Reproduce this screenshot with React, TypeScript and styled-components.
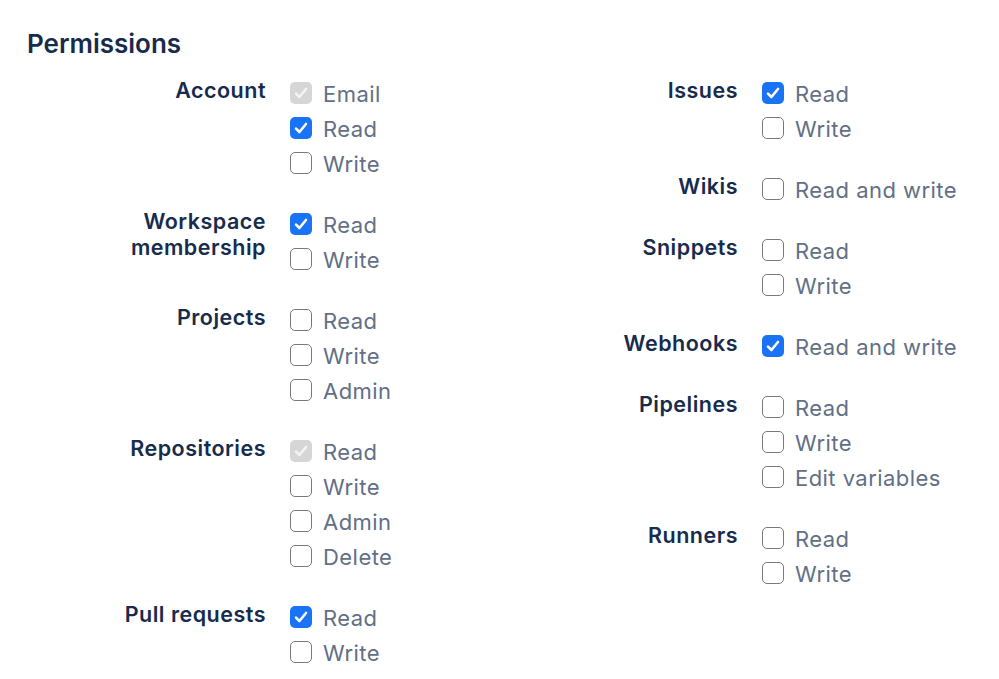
import styled, { createGlobalStyle } from "styled-components";

const GlobalStyle = createGlobalStyle`
  body {
    margin: 0;
    background: #fff;
    font-family: Inter, "Noto Sans", "Liberation Sans", sans-serif;
  }
`;

type Option = { label: string; checked?: boolean; disabled?: boolean };
type Group = { name: string; options: Option[] };

const leftGroups: Group[] = [
  {
    name: "Account",
    options: [
      { label: "Email", checked: true, disabled: true },
      { label: "Read", checked: true },
      { label: "Write" },
    ],
  },
  {
    name: "Workspace membership",
    options: [{ label: "Read", checked: true }, { label: "Write" }],
  },
  {
    name: "Projects",
    options: [{ label: "Read" }, { label: "Write" }, { label: "Admin" }],
  },
  {
    name: "Repositories",
    options: [
      { label: "Read", checked: true, disabled: true },
      { label: "Write" },
      { label: "Admin" },
      { label: "Delete" },
    ],
  },
  {
    name: "Pull requests",
    options: [{ label: "Read", checked: true }, { label: "Write" }],
  },
];

const rightGroups: Group[] = [
  {
    name: "Issues",
    options: [{ label: "Read", checked: true }, { label: "Write" }],
  },
  { name: "Wikis", options: [{ label: "Read and write" }] },
  { name: "Snippets", options: [{ label: "Read" }, { label: "Write" }] },
  { name: "Webhooks", options: [{ label: "Read and write", checked: true }] },
  {
    name: "Pipelines",
    options: [{ label: "Read" }, { label: "Write" }, { label: "Edit variables" }],
  },
  { name: "Runners", options: [{ label: "Read" }, { label: "Write" }] },
];

const Page = styled.div`
  padding: 27px 27px 0;
`;

const Title = styled.h2`
  margin: 0;
  font-size: 26px;
  line-height: 34px;
  font-weight: 600;
  color: #172b4d;
`;

const Columns = styled.div`
  display: grid;
  grid-template-columns: 472px 1fr;
  margin: 16px 0 0 89px;
`;

const Column = styled.div`
  display: flex;
  flex-direction: column;
  gap: 26px;
`;

const GroupRow = styled.div`
  display: grid;
  grid-template-columns: 150px 1fr;
  column-gap: 24px;
`;

const GroupName = styled.div`
  font-size: 21.5px;
  line-height: 26px;
  font-weight: 600;
  letter-spacing: 0.5px;
  color: #172b4d;
  text-align: right;
`;

const Options = styled.div`
  display: flex;
  flex-direction: column;
`;

const OptionRow = styled.label`
  display: flex;
  align-items: center;
  gap: 11px;
  height: 35px;
  font-size: 22px;
  letter-spacing: 0.45px;
  color: #626f86;
  margin-top: -1px;
  margin-bottom: 1px;
`;

const Box = styled.span<{ $checked?: boolean; $disabled?: boolean }>`
  box-sizing: border-box;
  width: 22px;
  height: 22px;
  border-radius: 5px;
  display: flex;
  align-items: center;
  justify-content: center;
  flex-shrink: 0;
  margin-top: -1px;
  background: ${(p) =>
    p.$disabled ? "#d6d6d6" : p.$checked ? "#1a73f5" : "#fff"};
  border: ${(p) => (p.$checked ? "none" : "1.5px solid #7a7a7a")};
`;

const CheckMark = ({ color }: { color: string }) => (
  <svg width="16" height="16" viewBox="0 0 16 16">
    <path
      d="M3 8.6 L6.4 12 L13 4"
      fill="none"
      stroke={color}
      strokeWidth="2.6"
      strokeLinecap="round"
      strokeLinejoin="round"
    />
  </svg>
);

const GroupBlock = ({ group }: { group: Group }) => (
  <GroupRow>
    <GroupName>{group.name}</GroupName>
    <Options>
      {group.options.map((o, i) => (
        <OptionRow key={i}>
          <Box $checked={o.checked} $disabled={o.disabled}>
            {o.checked && <CheckMark color={o.disabled ? "#f4f4f4" : "#fff"} />}
          </Box>
          {o.label}
        </OptionRow>
      ))}
    </Options>
  </GroupRow>
);

export default function App() {
  return (
    <>
      <GlobalStyle />
      <Page>
        <Title>Permissions</Title>
        <Columns>
          <Column>
            {leftGroups.map((g) => (
              <GroupBlock key={g.name} group={g} />
            ))}
          </Column>
          <Column>
            {rightGroups.map((g) => (
              <GroupBlock key={g.name} group={g} />
            ))}
          </Column>
        </Columns>
      </Page>
    </>
  );
}
